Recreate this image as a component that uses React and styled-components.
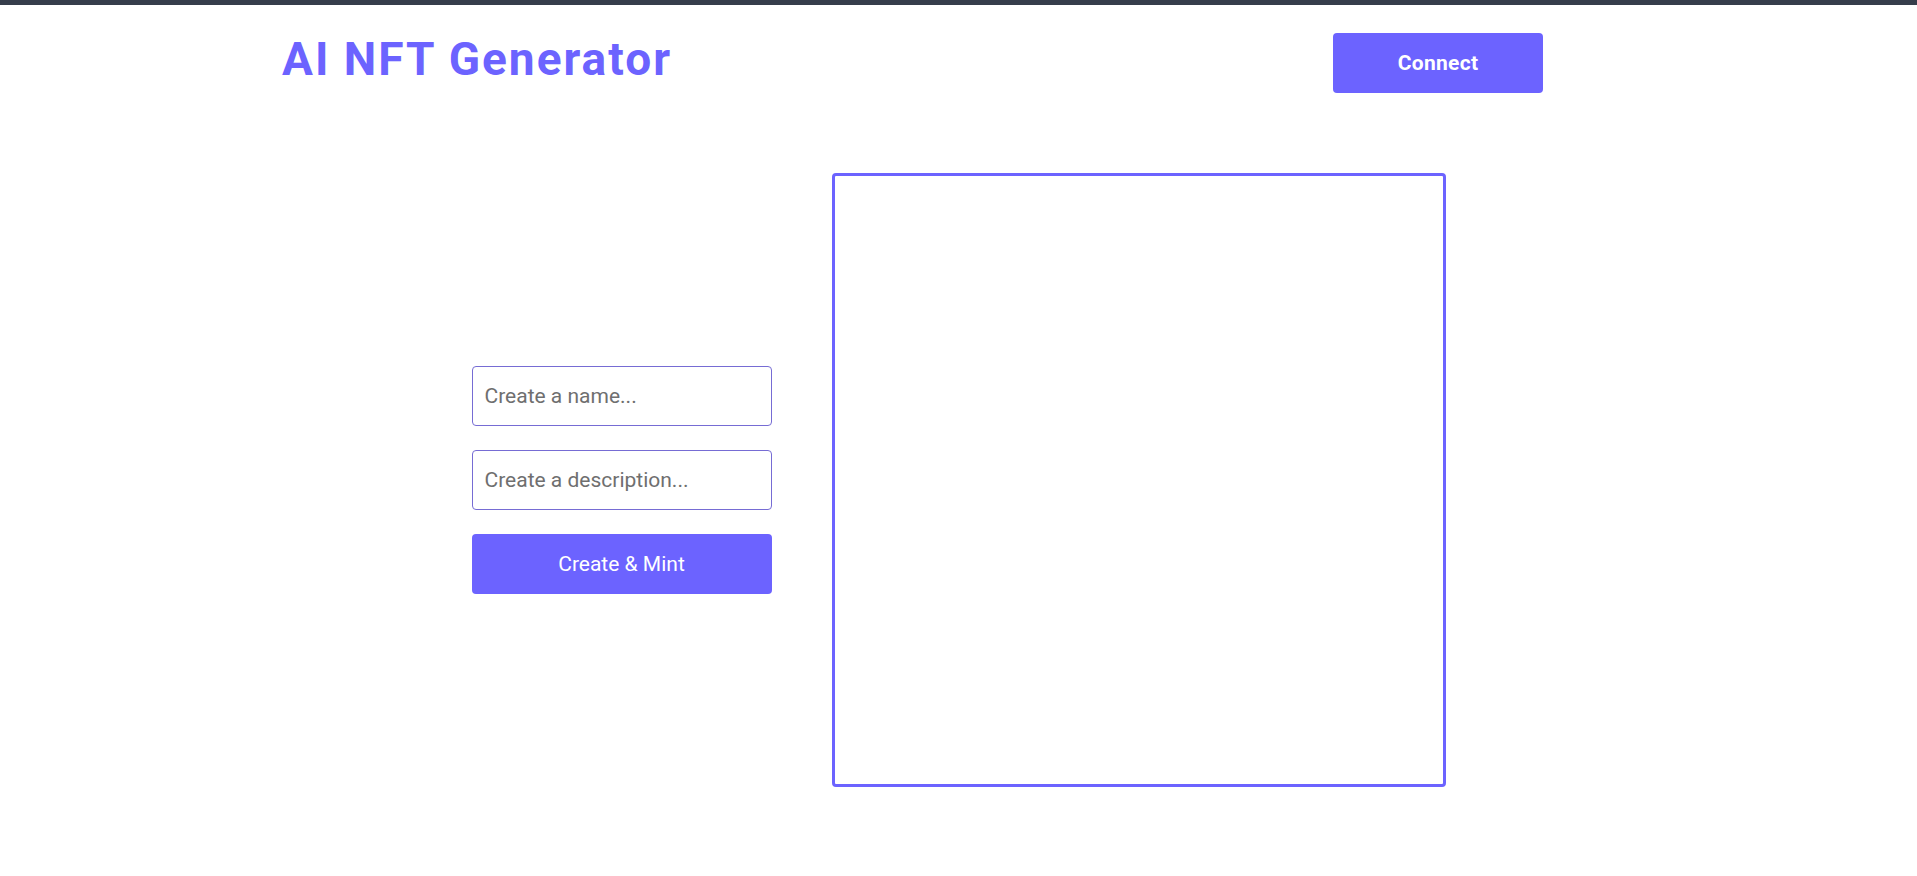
import React from "react";
import styled, { createGlobalStyle } from "styled-components";

const GlobalStyle = createGlobalStyle`
  html, body {
    margin: 0;
    padding: 0;
    background: #ffffff;
    font-family: Roboto, "Open Sans", "Liberation Sans", sans-serif;
  }
  * { box-sizing: border-box; }
`;

const Page = styled.div`
  min-height: 876px;
  border-top: 5px solid #363d4b;
`;

const Header = styled.nav`
  display: flex;
  align-items: center;
  justify-content: space-between;
  padding: 28px 374px 0 282px;
`;

const Title = styled.h1`
  margin: 0;
  margin-top: -8px;
  font-family: Roboto, "Liberation Sans", sans-serif;
  font-size: 46px;
  font-weight: 700;
  line-height: 1;
  color: #6c63ff;
  letter-spacing: 2px;
`;

const ConnectButton = styled.button`
  width: 210px;
  height: 60px;
  border: none;
  border-radius: 4px;
  background: #6c63ff;
  color: #ffffff;
  font-family: Roboto, "Liberation Sans", sans-serif;
  font-size: 21px;
  font-weight: 700;
  letter-spacing: 0.3px;
  cursor: pointer;
`;

const Main = styled.main`
  display: flex;
  justify-content: center;
  align-items: center;
  gap: 60px;
  margin-top: 80px;
`;

const Form = styled.form`
  display: flex;
  flex-direction: column;
  gap: 24px;
  width: 300px;
`;

const Input = styled.input`
  width: 300px;
  height: 60px;
  padding: 0 12px;
  border: 1px solid #766cd4;
  border-radius: 4px;
  font-family: Roboto, "Liberation Sans", sans-serif;
  font-size: 21px;
  color: #333;
  outline: none;
  &::placeholder {
    color: #6f6f6f;
  }
`;

const SubmitButton = styled.button`
  width: 300px;
  height: 60px;
  border: none;
  border-radius: 4px;
  background: #6c63ff;
  color: #ffffff;
  font-family: Roboto, "Liberation Sans", sans-serif;
  font-size: 21px;
  font-weight: 400;
  cursor: pointer;
`;

const ImageBox = styled.div`
  width: 614px;
  height: 614px;
  border: 3px solid #6c63ff;
  border-radius: 4px;
`;

export default function App() {
  return (
    <>
      <GlobalStyle />
      <Page>
        <Header>
          <Title>AI NFT Generator</Title>
          <ConnectButton type="button">Connect</ConnectButton>
        </Header>
        <Main>
          <Form onSubmit={(e) => e.preventDefault()}>
            <Input type="text" placeholder="Create a name..." />
            <Input type="text" placeholder="Create a description..." />
            <SubmitButton type="submit">Create &amp; Mint</SubmitButton>
          </Form>
          <ImageBox />
        </Main>
      </Page>
    </>
  );
}
